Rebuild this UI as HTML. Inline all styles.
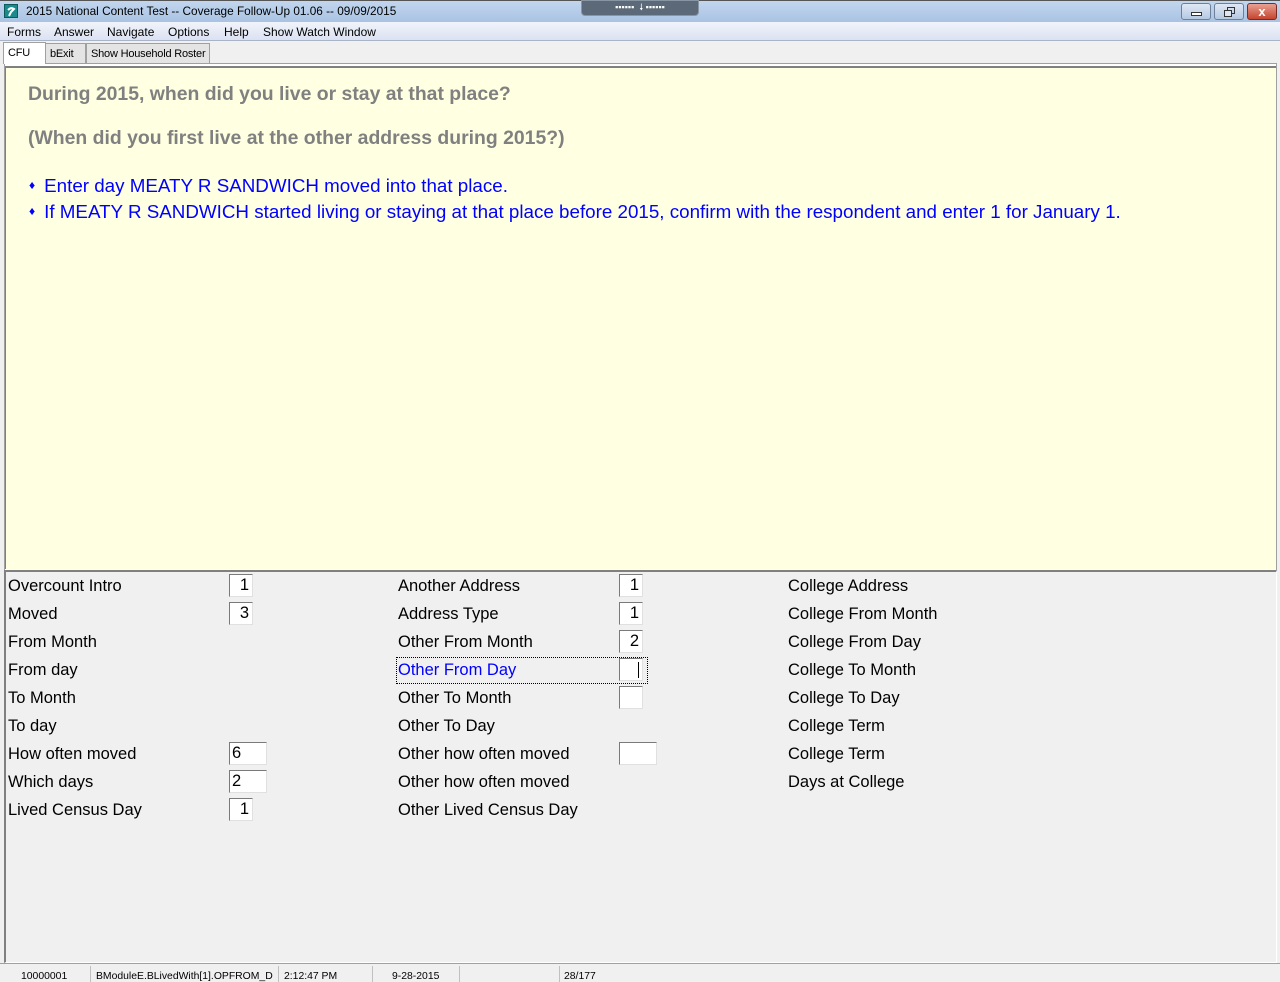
<!DOCTYPE html>
<html><head><meta charset="utf-8"><style>
*{margin:0;padding:0;box-sizing:border-box}
body{width:1280px;height:982px;background:#f0f0f0;position:relative;overflow:hidden;font-family:"Liberation Sans",sans-serif}
.a{position:absolute}
.title{left:0;top:0;width:1280px;height:22px;background:linear-gradient(#c2d6ee,#a9c3e3);border-top:1px solid #555}
.menu{left:0;top:22px;width:1280px;height:19px;background:linear-gradient(#f1f4fa,#dbe2f2);border-bottom:1px solid #aab4c8;font-size:12px}
.menu span{position:absolute;top:3px}
.tab{top:43px;height:20px;font-size:11px;border:1px solid #a0a0a0;border-bottom:none;background:#e4e4e4;padding:4px 4px 0;white-space:nowrap;letter-spacing:-0.2px}
.lbl{position:absolute;font-size:16.5px;color:#000;white-space:nowrap;margin-top:1px}
.box{position:absolute;width:24px;height:23px;background:#fff;border-top:1px solid #7a7a7a;border-left:1px solid #7a7a7a;border-right:1px solid #e0e0e0;border-bottom:1px solid #e0e0e0;font-size:16.5px;text-align:right;padding-right:3px;line-height:21px}
.sb{position:absolute;top:971px;font-size:10.4px;color:#000;white-space:nowrap}
.sep{position:absolute;top:966px;width:1px;height:16px;background:#c0c0c0}
.bl{position:absolute;left:29px;font-size:18.8px;color:#0000ff;white-space:nowrap}
.bl i{font-style:normal;font-size:12px;position:relative;top:-3px;margin-right:9px}
</style></head><body>
<div class="a title">
 <div class="a" style="left:4px;top:3px;width:14px;height:14px;background:#1a8a8a;border:1px solid #0c5a5a"><svg width="12" height="12"><path d="M3 4 Q6 1 9 3 L6 6 L4 10" stroke="#fff" stroke-width="2" fill="none"/></svg></div>
 <div class="a" style="left:26px;top:3px;font-size:11.8px;color:#000">2015 National Content Test -- Coverage Follow-Up 01.06 -- 09/09/2015</div>
 <div class="a" style="left:581px;top:-1px;width:118px;height:16px;background:#5b6978;border:1px solid #8895a3;border-radius:0 0 4px 4px;color:#fff;font-size:9px;text-align:center;line-height:12px">▪▪▪▪▪▪ &nbsp;🠗 ▪▪▪▪▪▪</div>
 <div class="a" style="left:1181px;top:2px;width:30px;height:17px;border:1px solid #6d7f99;border-radius:3px;background:linear-gradient(#dfe8f4,#b5c9e3)"><div class="a" style="left:9px;top:8px;width:11px;height:4px;border:1px solid #333;background:#fff"></div></div>
 <div class="a" style="left:1214px;top:2px;width:30px;height:17px;border:1px solid #6d7f99;border-radius:3px;background:linear-gradient(#dfe8f4,#b5c9e3)"><div class="a" style="left:12px;top:3px;width:8px;height:7px;border:1px solid #333"></div><div class="a" style="left:9px;top:6px;width:8px;height:7px;border:1px solid #333;background:#dde6f2"></div></div>
 <div class="a" style="left:1247px;top:2px;width:30px;height:17px;border:1px solid #7a2a22;border-radius:3px;background:linear-gradient(#e8a093,#c4452f);color:#fff;font-weight:bold;font-size:13px;text-align:center;line-height:15px">x</div>
</div>
<div class="a menu">
 <span style="left:7px">Forms</span><span style="left:54px">Answer</span><span style="left:107px">Navigate</span><span style="left:168px">Options</span><span style="left:224px">Help</span><span style="left:263px">Show Watch Window</span>
</div>
<div class="a tab" style="left:3px;top:42px;width:43px;height:22px;background:#fff;z-index:2;padding-top:4px">CFU</div>
<div class="a tab" style="left:45px;width:41px">bExit</div>
<div class="a tab" style="left:86px;width:124px">Show Household Roster</div>

<div class="a" style="left:4px;top:63px;width:1273px;height:508px;background:#fff;border:1px solid #a0a0a0"></div>
<div class="a" style="left:5px;top:66px;width:1271px;height:503px;background:#ffffe1;border-top:2px solid #808080;border-left:1px solid #808080"></div>
<div class="a" style="left:28px;top:83px;font-size:19.4px;font-weight:bold;color:#808080">During 2015, when did you live or stay at that place?</div>
<div class="a" style="left:28px;top:127px;font-size:19.4px;font-weight:bold;color:#808080">(When did you first live at the other address during 2015?)</div>
<div class="bl" style="top:175px"><i>♦</i>Enter day MEATY R SANDWICH moved into that place.</div>
<div class="bl" style="top:201px"><i>♦</i>If MEATY R SANDWICH started living or staying at that place before 2015, confirm with the respondent and enter 1 for January 1.</div>

<div class="a" style="left:4px;top:570px;width:1273px;height:393px;border-top:2px solid #808080;border-left:2px solid #808080;border-right:1px solid #fff;border-bottom:1px solid #fff"></div>
<div class="a" style="left:0;top:963px;width:1280px;height:2px;border-top:1px solid #a0a0a0"></div>

<div class="lbl" style="left:8px;top:576px">Overcount Intro</div><div class="box" style="left:229px;top:574px">1</div>
<div class="lbl" style="left:8px;top:604px">Moved</div><div class="box" style="left:229px;top:602px">3</div>
<div class="lbl" style="left:8px;top:632px">From Month</div>
<div class="lbl" style="left:8px;top:660px">From day</div>
<div class="lbl" style="left:8px;top:688px">To Month</div>
<div class="lbl" style="left:8px;top:716px">To day</div>
<div class="lbl" style="left:8px;top:744px">How often moved</div><div class="box" style="left:229px;top:742px;width:38px;text-align:left;padding-left:2px">6</div>
<div class="lbl" style="left:8px;top:772px">Which days</div><div class="box" style="left:229px;top:770px;width:38px;text-align:left;padding-left:2px">2</div>
<div class="lbl" style="left:8px;top:800px">Lived Census Day</div><div class="box" style="left:229px;top:798px">1</div>

<div class="lbl" style="left:398px;top:576px">Another Address</div><div class="box" style="left:619px;top:574px">1</div>
<div class="lbl" style="left:398px;top:604px">Address Type</div><div class="box" style="left:619px;top:602px">1</div>
<div class="lbl" style="left:398px;top:632px">Other From Month</div><div class="box" style="left:619px;top:630px">2</div>
<div class="a" style="left:396px;top:657px;width:252px;height:27px;border:1px dotted #000"></div>
<div class="lbl" style="left:398px;top:660px;color:#0000ff">Other From Day</div><div class="box" style="left:619px;top:658px"><div class="a" style="left:18px;top:3px;width:1px;height:16px;background:#000"></div></div>
<div class="lbl" style="left:398px;top:688px">Other To Month</div><div class="box" style="left:619px;top:686px"></div>
<div class="lbl" style="left:398px;top:716px">Other To Day</div>
<div class="lbl" style="left:398px;top:744px">Other how often moved</div><div class="box" style="left:619px;top:742px;width:38px"></div>
<div class="lbl" style="left:398px;top:772px">Other how often moved</div>
<div class="lbl" style="left:398px;top:800px">Other Lived Census Day</div>

<div class="lbl" style="left:788px;top:576px">College Address</div>
<div class="lbl" style="left:788px;top:604px">College From Month</div>
<div class="lbl" style="left:788px;top:632px">College From Day</div>
<div class="lbl" style="left:788px;top:660px">College To Month</div>
<div class="lbl" style="left:788px;top:688px">College To Day</div>
<div class="lbl" style="left:788px;top:716px">College Term</div>
<div class="lbl" style="left:788px;top:744px">College Term</div>
<div class="lbl" style="left:788px;top:772px">Days at College</div>

<div class="sb" style="left:21px">10000001</div>
<div class="sep" style="left:90px"></div>
<div class="sb" style="left:96px">BModuleE.BLivedWith[1].OPFROM_D</div>
<div class="sep" style="left:278px"></div>
<div class="sb" style="left:284px">2:12:47 PM</div>
<div class="sep" style="left:372px"></div>
<div class="sb" style="left:392px">9-28-2015</div>
<div class="sep" style="left:459px"></div>
<div class="sep" style="left:559px"></div>
<div class="sb" style="left:564px">28/177</div>
</body></html>
